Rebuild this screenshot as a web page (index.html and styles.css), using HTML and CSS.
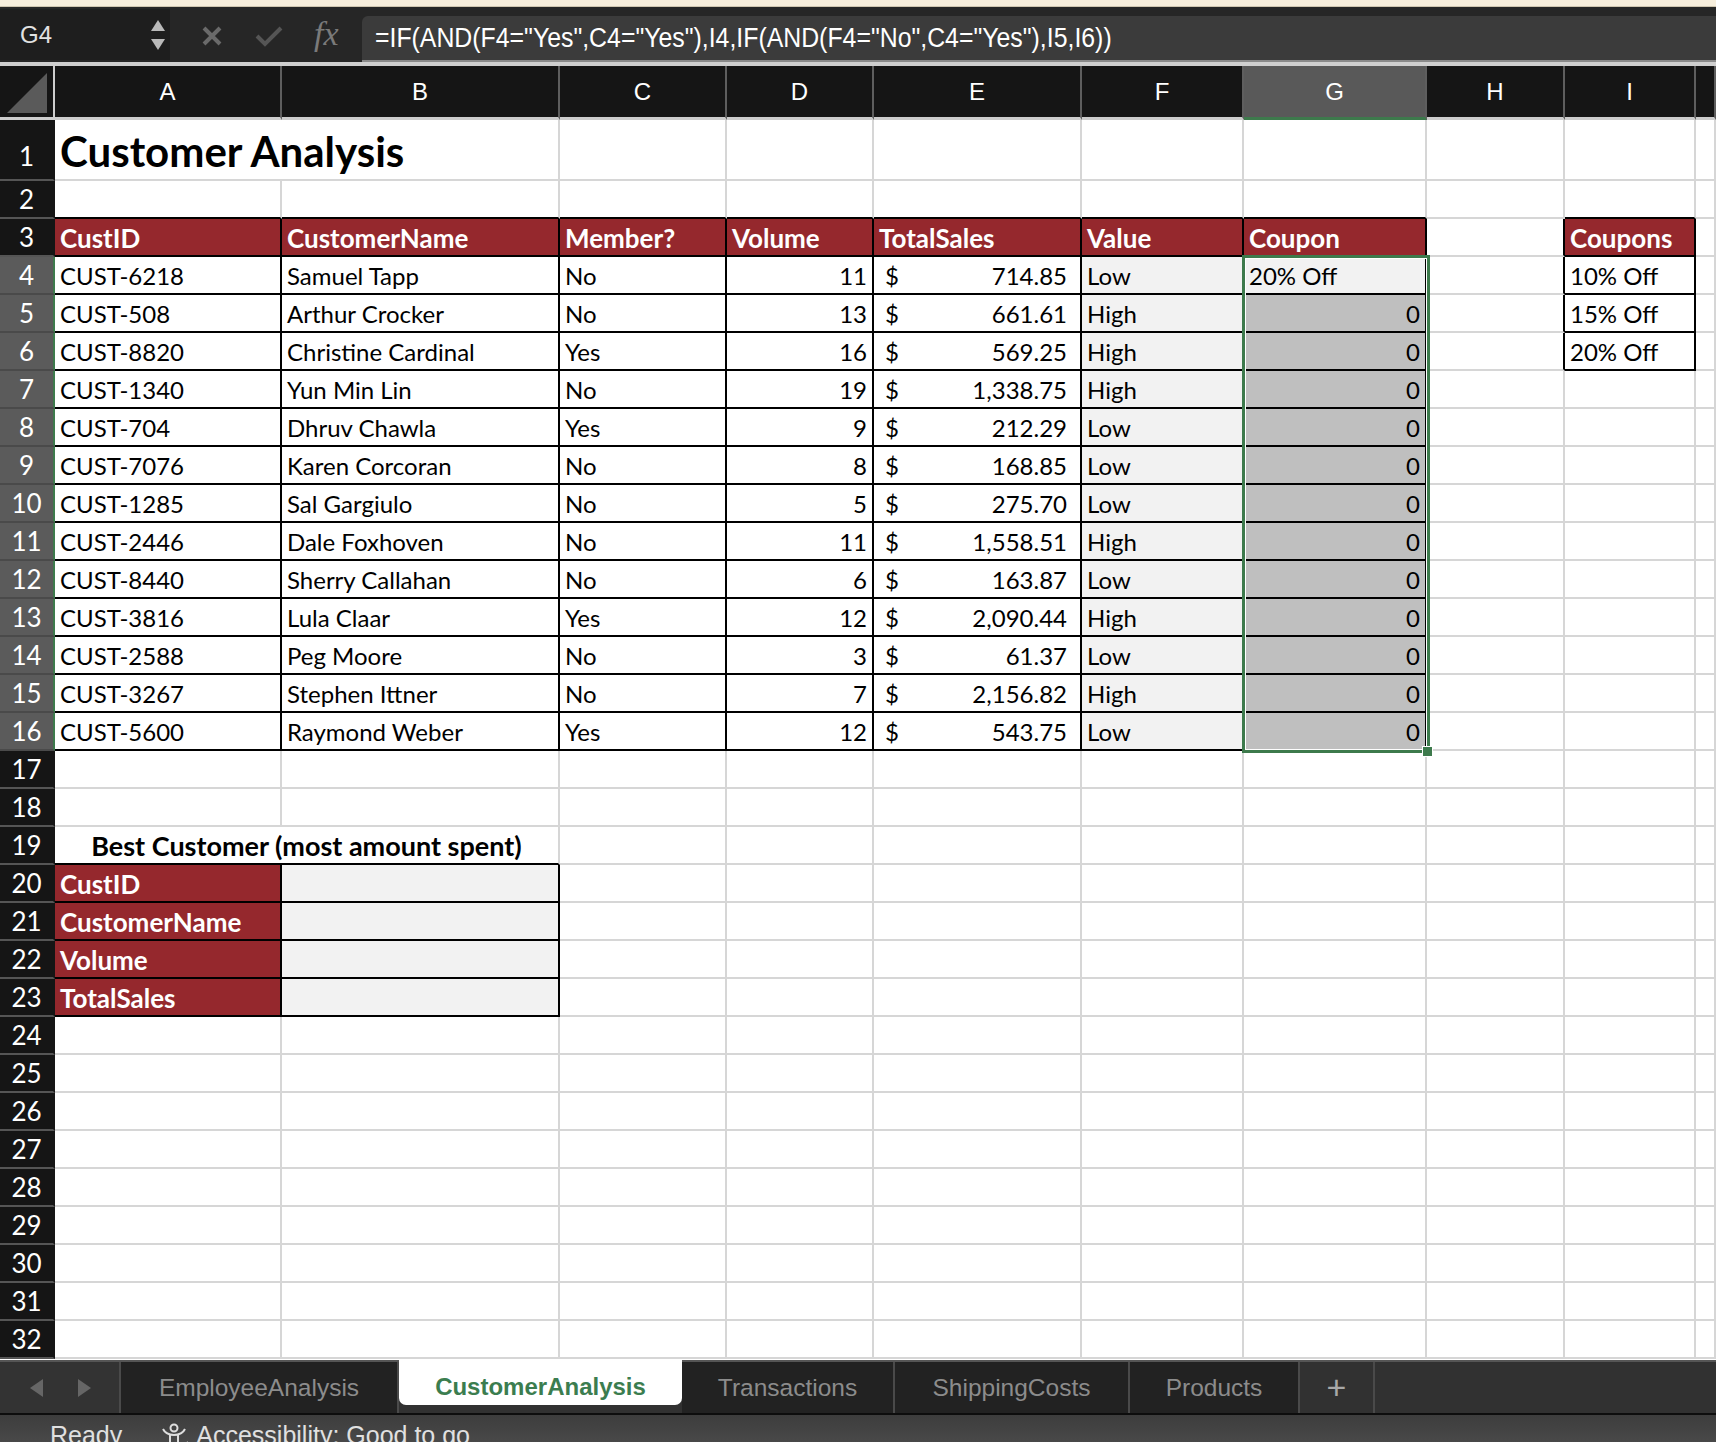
FILE: index.html
```html
<!DOCTYPE html>
<html lang="en">
  <head>
    <meta charset="UTF-8" />
    <meta name="viewport" content="width=device-width, initial-scale=1.0" />
    <title>CustomerAnalysis</title>
    <link rel="stylesheet" href="styles.css">
  </head>
  <body>
    <div class="top-strip"></div>

    <div class="formula-bar">
      <div class="name-box">
        <span>G4</span>
        <svg class="spin" width="16" height="36" viewBox="0 0 16 36">
          <path d="M8 3 L15 14 L1 14 Z" fill="#b9b9b9" />
          <path d="M1 22 L15 22 L8 33 Z" fill="#b9b9b9" />
        </svg>
      </div>
      <div class="fb-tools">
        <svg width="24" height="24" viewBox="0 0 24 24">
          <path d="M4 4 L20 20 M20 4 L4 20" stroke="#6a6a6a" stroke-width="4" />
        </svg>
        <svg width="30" height="24" viewBox="0 0 30 24">
          <path d="M3 12 L11 20 L27 4" stroke="#555" stroke-width="4" fill="none" />
        </svg>
        <span class="fx">fx</span>
      </div>
      <div class="formula">
        <span>=IF(AND(F4="Yes",C4="Yes"),I4,IF(AND(F4="No",C4="Yes"),I5,I6))</span>
      </div>
    </div>

    <div class="sheet">
      <table class="grid">
        <colgroup>
          <col class="w-hdr"><col class="w-a"><col class="w-b"><col class="w-c">
          <col class="w-d"><col class="w-e"><col class="w-f"><col class="w-g">
          <col class="w-h"><col class="w-i"><col class="w-j">
        </colgroup>
        <thead>
          <tr>
            <th class="corner">
              <svg width="44" height="44" viewBox="0 0 44 44">
                <path d="M42 2 L42 42 L2 42 Z" fill="#5a5a5a" />
              </svg>
            </th>
            <th>A</th><th>B</th><th>C</th><th>D</th><th>E</th><th>F</th>
            <th class="col-sel">G</th><th>H</th><th>I</th><th></th>
          </tr>
        </thead>
        <tbody id="rows"></tbody>
      </table>
      <div class="selection"></div>
      <div class="fill-handle"></div>
    </div>

    <div class="tabbar">
      <div class="tab-nav">
        <svg width="14" height="18" viewBox="0 0 14 18"><path d="M13 0 L13 18 L0 9 Z" fill="#666" /></svg>
        <svg width="14" height="18" viewBox="0 0 14 18"><path d="M1 0 L1 18 L14 9 Z" fill="#666" /></svg>
      </div>
      <div class="tab t-emp">EmployeeAnalysis</div>
      <div class="tab t-cust active">CustomerAnalysis</div>
      <div class="tab t-trans">Transactions</div>
      <div class="tab t-ship">ShippingCosts</div>
      <div class="tab t-prod">Products</div>
      <div class="tab-add">+</div>
    </div>

    <div class="status">
      <span class="ready">Ready</span>
      <svg class="a11y" width="30" height="26" viewBox="0 0 30 26">
        <circle cx="14" cy="5" r="3.5" fill="none" stroke="#ddd" stroke-width="2" />
        <path d="M3 6 Q6 12 14 12 Q22 12 25 6" fill="none" stroke="#ddd" stroke-width="2" />
        <path d="M10 12 L10 26 M18 12 L18 20" fill="none" stroke="#ddd" stroke-width="2" />
        <path d="M19 23 L22 26 L28 19" fill="none" stroke="#ddd" stroke-width="2" />
      </svg>
      <span>Accessibility: Good to go</span>
    </div>

    <script>
      const cols = ["A", "B", "C", "D", "E", "F", "G", "H", "I", "J"];

      const customers = [
        ["CUST-6218", "Samuel Tapp", "No", 11, "714.85", "Low"],
        ["CUST-508", "Arthur Crocker", "No", 13, "661.61", "High"],
        ["CUST-8820", "Christine Cardinal", "Yes", 16, "569.25", "High"],
        ["CUST-1340", "Yun Min Lin", "No", 19, "1,338.75", "High"],
        ["CUST-704", "Dhruv Chawla", "Yes", 9, "212.29", "Low"],
        ["CUST-7076", "Karen Corcoran", "No", 8, "168.85", "Low"],
        ["CUST-1285", "Sal Gargiulo", "No", 5, "275.70", "Low"],
        ["CUST-2446", "Dale Foxhoven", "No", 11, "1,558.51", "High"],
        ["CUST-8440", "Sherry Callahan", "No", 6, "163.87", "Low"],
        ["CUST-3816", "Lula Claar", "Yes", 12, "2,090.44", "High"],
        ["CUST-2588", "Peg Moore", "No", 3, "61.37", "Low"],
        ["CUST-3267", "Stephen Ittner", "No", 7, "2,156.82", "High"],
        ["CUST-5600", "Raymond Weber", "Yes", 12, "543.75", "Low"],
      ];

      // cell contents by reference, e.g. "B4"
      const cells = {};
      function set(ref, text, cls, span) {
        cells[ref] = { text: text, cls: cls || "", span: span || 1 };
      }

      set("A1", "Customer Analysis", "title", 2);

      ["A", "B", "C", "D", "E", "F", "G", "I"].forEach((c) => set(c + "2", "", "bb"));
      ["CustID", "CustomerName", "Member?", "Volume", "TotalSales", "Value", "Coupon"].forEach(
        (h, i) => set(cols[i] + "3", h, "hd bx")
      );
      set("H3", "", "br");
      set("I3", "Coupons", "hd bx");

      customers.forEach((c, i) => {
        const r = i + 4;
        set("A" + r, c[0], "bx");
        set("B" + r, c[1], "bx");
        set("C" + r, c[2], "bx");
        set("D" + r, c[3], "bx num");
        set(
          "E" + r,
          '<div class="acc"><span>$</span><span>' + c[4] + "</span></div>",
          "bx"
        );
        set("F" + r, c[5], "bx soft");
        set("G" + r, r === 4 ? "20% Off" : "0", r === 4 ? "bx soft" : "bx dim num");
      });

      ["10% Off", "15% Off", "20% Off"].forEach((t, i) => {
        set("H" + (i + 4), "", "br");
        set("I" + (i + 4), t, "bx");
      });

      set("A19", "Best Customer (most amount spent)", "sub bb", 2);
      ["CustID", "CustomerName", "Volume", "TotalSales"].forEach((t, i) => {
        set("A" + (20 + i), t, "hd bx");
        set("B" + (20 + i), "", "bx soft");
      });

      const body = document.getElementById("rows");
      for (let r = 1; r <= 32; r++) {
        const tr = document.createElement("tr");
        if (r === 1) tr.className = "first";
        const th = document.createElement("th");
        th.className = "row-hdr" + (r >= 4 && r <= 16 ? " sel" : "");
        th.textContent = r;
        tr.appendChild(th);

        for (let i = 0; i < cols.length; i++) {
          const td = document.createElement("td");
          const cell = cells[cols[i] + r];
          if (cell) {
            td.className = cell.cls;
            td.innerHTML = cell.text;
            if (cell.span > 1) {
              td.colSpan = cell.span;
              i += cell.span - 1;
            }
          }
          tr.appendChild(td);
        }
        body.appendChild(tr);
      }
    </script>
  </body>
</html>
```

FILE: styles.css
```css
* {
  box-sizing: border-box;
}

body {
  margin: 0;
  width: 1716px;
  height: 1442px;
  overflow: hidden;
  background-color: #2b2b2b;
  font-family: "Liberation Sans", Arial, sans-serif;
}

.top-strip {
  height: 7px;
  background-color: #f6eedc;
  border-bottom: 1px solid #cfc6b0;
}

/* formula bar */

.formula-bar {
  height: 59px;
  display: flex;
  align-items: stretch;
  background-color: #262626;
  border-bottom: 4px solid #cfcfcf;
  padding-top: 2px;
}

.name-box {
  width: 170px;
  margin-bottom: 2px;
  display: flex;
  align-items: center;
  justify-content: space-between;
  padding: 0 4px 0 20px;
  background-color: #1e1e1e;
  color: #e2e2e2;
  font-size: 24px;
}

.fb-tools {
  width: 192px;
  display: flex;
  align-items: center;
  padding-left: 30px;
  gap: 30px;
}

.fx {
  font-family: "Liberation Serif", "Times New Roman", serif;
  font-style: italic;
  font-size: 34px;
  color: #7a7a7a;
  margin-top: -4px;
}

.formula {
  flex: 1;
  margin-top: 7px;
  display: flex;
  align-items: center;
  padding-left: 13px;
  background-color: #3b3b3b;
  border-radius: 6px 0 0 0;
  border-bottom: 2px solid #8a8a8a;
  color: #fff;
  font-size: 27px;
  white-space: nowrap;
  overflow: hidden;
}

.formula span {
  display: inline-block;
  transform: scaleX(0.92);
  transform-origin: left center;
}

/* grid */

.sheet {
  position: relative;
  height: 1294px;
  overflow: hidden;
  background-color: #fff;
}

.grid {
  width: 1716px;
  table-layout: fixed;
  border-collapse: separate;
  border-spacing: 0;
}

.w-hdr { width: 55px; }
.w-a { width: 227px; }
.w-b { width: 278px; }
.w-c { width: 167px; }
.w-d { width: 147px; }
.w-e { width: 208px; }
.w-f { width: 162px; }
.w-g { width: 183px; }
.w-h { width: 138px; }
.w-i { width: 131px; }
.w-j { width: 20px; }

.grid thead th {
  height: 54px;
  padding: 0;
  background-color: #151515;
  color: #fff;
  font-family: "Liberation Sans", Arial, sans-serif;
  font-size: 24px;
  font-weight: normal;
  border-right: 2px solid #5e5e5e;
  border-bottom: 3px solid #cdcdcd;
}

.grid thead th.corner {
  text-align: right;
  vertical-align: bottom;
  padding: 0 4px 2px 0;
  border-right: 2px solid #cdcdcd;
}

.corner svg {
  display: block;
  margin-left: auto;
}

.grid thead th.col-sel {
  background-color: #595959;
  border-bottom-color: #3d7a4c;
}

.grid tbody tr {
  height: 38px;
}

.grid tbody tr.first {
  height: 61px;
}

.row-hdr {
  padding: 0;
  background-color: #151515;
  color: #fff;
  font-family: Lato, "Liberation Sans", sans-serif;
  font-size: 26px;
  font-weight: normal;
  text-align: center;
  vertical-align: middle;
  line-height: 32px;
  border-bottom: 2px solid #555;
  border-right: 2px solid #151515;
}

.first .row-hdr {
  padding-top: 12px;
}

.row-hdr.sel {
  background-color: #5b5b5b;
  border-bottom-color: #4a4a4a;
  border-right-color: #3d7a4c;
}

.grid td {
  padding: 0 5px 1px;
  font-family: Lato, "Liberation Sans", sans-serif;
  font-size: 24px;
  line-height: 32px;
  color: #000;
  vertical-align: bottom;
  white-space: nowrap;
  overflow: hidden;
  border-right: 2px solid #d6d6d6;
  border-bottom: 2px solid #d6d6d6;
}

.grid td.bx {
  border-right-color: #000;
  border-bottom-color: #000;
}

.grid td.bb {
  border-bottom-color: #000;
}

.grid td.br {
  border-right-color: #000;
}

.grid td.hd {
  background-color: #95282d;
  color: #fff;
  font-size: 26px;
  font-weight: bold;
}

.grid td.num {
  text-align: right;
}

.grid td.soft {
  background-color: #f2f2f2;
}

.grid td.dim {
  background-color: #bfbfbf;
}

.grid td.title {
  font-size: 42px;
  font-weight: bold;
  line-height: 52px;
  padding-bottom: 2px;
}

.grid td.sub {
  text-align: center;
  font-size: 27px;
  font-weight: bold;
}

.acc {
  display: flex;
  justify-content: space-between;
  padding: 0 8px 0 6px;
}

.selection {
  position: absolute;
  left: 1242px;
  top: 189px;
  width: 188px;
  height: 498px;
  border: 3px solid #3d7a4c;
  box-shadow: inset 0 0 0 1px #fff;
  pointer-events: none;
}

.fill-handle {
  position: absolute;
  left: 1422px;
  top: 680px;
  width: 11px;
  height: 11px;
  background-color: #3d7a4c;
  border: 1px solid #fff;
}

/* sheet tabs */

.tabbar {
  height: 55px;
  display: flex;
  background-color: #313131;
  border-top: 2px solid #555;
  border-bottom: 2px solid #0d0d0d;
}

.tab-nav {
  width: 121px;
  display: flex;
  align-items: center;
  gap: 33px;
  padding-left: 30px;
  background-color: #333;
  border-right: 2px solid #4a4a4a;
}

.tab {
  display: flex;
  align-items: center;
  justify-content: center;
  background-color: #222;
  color: #8c8c8c;
  font-size: 24.5px;
  border-right: 2px solid #4a4a4a;
}

.tab.active {
  margin-top: -2px;
  margin-bottom: 8px;
  padding-top: 9px;
  background-color: #fff;
  color: #3b7d4f;
  font-size: 24px;
  font-weight: bold;
  border-right: none;
  border-radius: 0 0 7px 7px;
}

.t-emp { width: 278px; }
.t-cust { width: 283px; }
.t-trans { width: 213px; }
.t-ship { width: 235px; }
.t-prod { width: 170px; }

.tab-add {
  width: 75px;
  display: flex;
  align-items: center;
  justify-content: center;
  color: #a8a8a8;
  font-size: 34px;
  border-right: 2px solid #4a4a4a;
}

/* status bar */

.status {
  height: 30px;
  display: flex;
  align-items: flex-start;
  padding: 6px 0 0 50px;
  background: linear-gradient(#3d3d3d, #4a4a4a);
  color: #e0e0e0;
  font-size: 25px;
  white-space: nowrap;
}

.ready {
  margin-right: 38px;
}

.a11y {
  margin: 2px 6px 0 0;
}
```
